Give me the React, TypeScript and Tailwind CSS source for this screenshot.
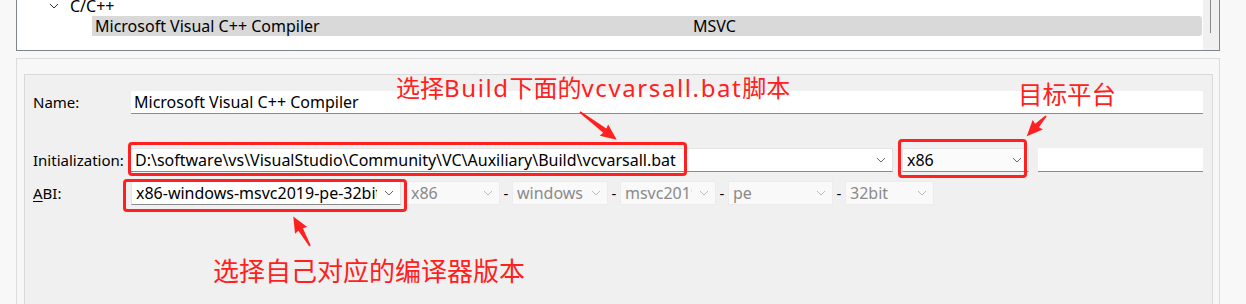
import React from 'react';

const RED = '#ff2020';

function Chevron({ color = '#5a5a5a' }: { color?: string }) {
  return (
    <svg width="10" height="6" viewBox="0 0 10 6" className="shrink-0">
      <polyline points="1,1 5,5 9,1" fill="none" stroke={color} strokeWidth="1" />
    </svg>
  );
}

function Combo({ text, w, on = true, dark = false }: { text: string; w: string; on?: boolean; dark?: boolean }) {
  return (
    <div
      className={`${w} h-[24px] flex items-center gap-[7px] pl-[4px] pr-[6px] shrink-0 text-[16px] ${
        on
          ? `${dark ? 'bg-[#fbfbfb]' : 'bg-white'} border border-[#e3e3e3] border-b-[#8b8b8b] text-black`
          : 'bg-[#f9f9f9] border border-[#ececec] text-[#8a8a8a]'
      }`}
    >
      <span className="flex-1 overflow-hidden whitespace-nowrap">{text}</span>
      <Chevron color={on ? '#666' : '#bbb'} />
    </div>
  );
}

function Arrow({ x, y, len, deg }: { x: number; y: number; len: number; deg: number }) {
  const h = 15;
  const b = len - h;
  return (
    <g transform={`translate(${x} ${y}) rotate(${deg})`}>
      <polygon points={`0,-0.8 ${b},-2.6 ${b - 1},-7 ${len},0 ${b - 1},7 ${b},2.6 0,0.8`} fill={RED} />
    </g>
  );
}

export default function App() {
  return (
    <div className="relative w-[1246px] h-[304px] overflow-hidden bg-[#f8f8f8] text-[15px] text-black font-['Noto_Sans','Noto_Sans_CJK_SC',sans-serif]">
      {/* tree list */}
      <div className="ml-4 w-[1204px] h-[51px] border-x border-b border-[#80858d] bg-white flex text-[16px]">
        <div className="flex-1 overflow-hidden">
          <div className="h-[21px] mt-[-5px] flex items-center pl-[32px]">
            <Chevron color="#333" />
            <span className="ml-[11px]">C/C++</span>
          </div>
          <div className="h-[20px] ml-[75px] mr-[1px] bg-[#d9d9d9] rounded-r-[3px] flex items-center pl-[3px]">
            <span className="w-[598px]">Microsoft Visual C++ Compiler</span>
            <span>MSVC</span>
          </div>
        </div>
        <div className="w-[16px] bg-[#f0f0f0] pl-[7px]">
          <div className="w-[1px] h-[33px] bg-[#8a8a8a]" />
        </div>
      </div>

      {/* details panel */}
      <div className="ml-4 mt-[7px] w-[1204px] h-[260px] border border-[#dcdcdc] bg-[#f7f7f7] pl-[7px] pr-[6px] pt-[15px]">
        <div className="h-full border border-[#d9d9d9] bg-[#f0f0f0] pl-[8px] pt-[16px]">
          <div className="flex items-center h-[23px]">
            <span className="w-[98px]">Name:</span>
            <div className="w-[1072px] h-[23px] bg-white border-b border-[#8b8b8b] flex items-center pl-[3px] text-[16px]">
              Microsoft Visual C++ Compiler
            </div>
          </div>

          <div className="flex items-center h-[24px] mt-[34px]">
            <span className="w-[97px]">Initialization:</span>
            <Combo w="w-[763px]" text="D:\software\vs\VisualStudio\Community\VC\Auxiliary\Build\vcvarsall.bat" />
            <div className="ml-[9px]">
              <Combo w="w-[127px]" text="x86" dark />
            </div>
            <div className="ml-[9px] w-[165px] h-[24px] bg-white border-b border-[#8b8b8b]" />
          </div>

          <div className="flex items-center h-[24px] mt-[9px]">
            <span className="w-[98px]">
              <span className="underline underline-offset-2">A</span>BI:
            </span>
            <Combo w="w-[270px]" text="x86-windows-msvc2019-pe-32bit" />
            <div className="ml-[5px] flex items-center">
              <Combo w="w-[94px]" text="x86" on={false} />
              <span className="w-[12px] text-center">-</span>
              <Combo w="w-[96px]" text="windows" on={false} />
              <span className="w-[12px] text-center">-</span>
              <Combo w="w-[96px]" text="msvc2019" on={false} />
              <span className="w-[12px] text-center">-</span>
              <Combo w="w-[105px]" text="pe" on={false} />
              <span className="w-[12px] text-center">-</span>
              <Combo w="w-[89px]" text="32bit" on={false} />
            </div>
          </div>
        </div>
      </div>

      {/* annotations */}
      <div className="absolute left-[128px] top-[142px] w-[559px] h-[34px] border-[3px] border-[#ff2020] rounded-[4px]" />
      <div className="absolute left-[898px] top-[139px] w-[129px] h-[39px] border-[3px] border-[#ff2020] rounded-[4px]" />
      <div className="absolute left-[123px] top-[179px] w-[284px] h-[33px] border-[3px] border-[#ff2020] rounded-[4px]" />

      <div className="absolute left-[396px] top-[72px] text-[24px] leading-[32px] text-[#ff2020] font-['Noto_Sans','Noto_Sans_CJK_SC',sans-serif] whitespace-nowrap">
        选择<span className="tracking-[1.6px]">Build</span>下面的<span className="tracking-[1.6px]">vcvarsall.bat</span>脚本
      </div>
      <div className="absolute left-[1018px] top-[78px] text-[24.5px] leading-[32px] text-[#ff2020] font-['Noto_Sans_CJK_SC',sans-serif] whitespace-nowrap">
        目标平台
      </div>
      <div className="absolute left-[213px] top-[253px] text-[26px] leading-[34px] text-[#ff2020] font-['Noto_Sans_CJK_SC',sans-serif] whitespace-nowrap">
        选择自己对应的编译器版本
      </div>

      <svg className="absolute inset-0 pointer-events-none" width="1246" height="304">
        <Arrow x={580} y={112} len={46} deg={37} />
        <Arrow x={1046} y={116} len={28} deg={133.5} />
        <Arrow x={310} y={246} len={34} deg={-119.5} />
      </svg>
    </div>
  );
}
